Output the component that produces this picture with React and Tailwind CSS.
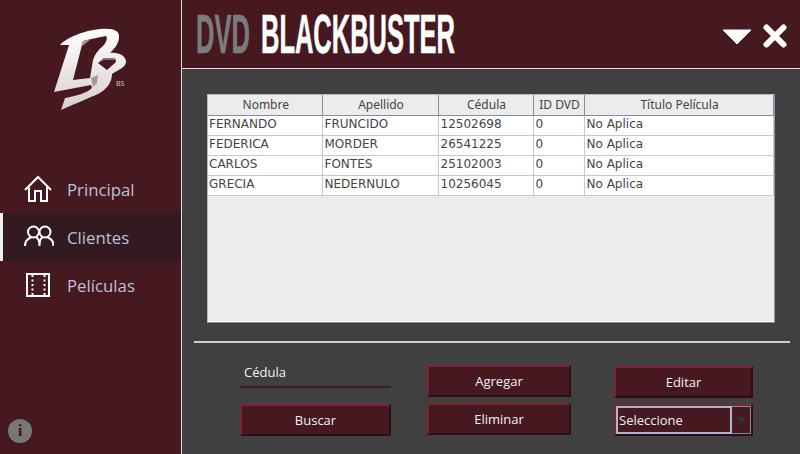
import React from "react";

const clientes = [
  ["FERNANDO", "FRUNCIDO", "12502698", "0", "No Aplica"],
  ["FEDERICA", "MORDER", "26541225", "0", "No Aplica"],
  ["CARLOS", "FONTES", "25102003", "0", "No Aplica"],
  ["GRECIA", "NEDERNULO", "10256045", "0", "No Aplica"],
];

const headers = ["Nombre", "Apellido", "Cédula", "ID DVD", "Título Película"];
const colWidths = ["w-[114px]", "w-[116px]", "w-[95px]", "w-[51px]", "w-[189px]"];

const Logo = () => (
  <svg width="80" height="90" viewBox="50 25 80 90" className="block">
    <defs>
      <linearGradient id="logoFill" x1="0" y1="0" x2="0" y2="1">
        <stop offset="0" stopColor="#ffffff" />
        <stop offset="1" stopColor="#d9cdcf" />
      </linearGradient>
    </defs>
    <path
      fillRule="evenodd"
      fill="url(#logoFill)"
      d="M59 45C66 37 85 30 100 29C113 28 119 31 118 38C117 45 113 49 109 53C118 52 125 56 125 62C125 67 117 70 111 74C111 82 106 90 95 95C85 99 72 105 60 110L64 98C75 96 86 93 91 88L90 85L53 92L68 45ZM82 41C90 39 99 37 105 36C107 38 105 43 102 46C97 50 94 54 92 60L89 78L72 80ZM97 63L103 58L114 58L115 62L106 70Z"
    />
    <path fill="#8d7276" d="M97 63L103 58L114 58L114.500 60L103 60Z" />
    <path fill="#a99498" d="M82 41L90 39L80 47L79 50Z" />
    <path fill="#a99498" d="M90 78L97 75L96 83L92 87Z" />
  </svg>
);

const HomeIcon = () => (
  <svg width="28" height="28" viewBox="0 0 28 28" fill="none" stroke="white" strokeWidth="2">
    <path d="M1 15L14 2L27 15M5 12V26H11V16H17V26H23V12" />
  </svg>
);

const UsersIcon = () => (
  <svg width="30" height="28" viewBox="0 0 30 28" fill="none" stroke="white" strokeWidth="2">
    <circle cx="9.5" cy="9" r="5.5" />
    <circle cx="21" cy="9" r="5.5" />
    <path d="M1 23C1 18 4 15.5 7 14.5M12 14.5C15 15.5 15.500 19 15.5 23M15.5 23C15.5 19 16 15.500 18.5 14.5M23.5 14.5C27 15.5 29.5 18 29.5 23" />
  </svg>
);

const FilmIcon = () => (
  <svg width="28" height="28" viewBox="0 0 28 28" fill="none" stroke="white">
    <rect x="3" y="3" width="22" height="22" strokeWidth="2" />
    <path d="M8.5 4V24M20.5 4V24" strokeWidth="2" strokeDasharray="2 2.5" />
  </svg>
);

const NavItem = ({ icon, label, active }) => (
  <div
    className={
      "flex h-12 items-center gap-[14px] pl-6 text-[16.8px] text-[#bcc2d8] " +
      (active ? "border-l-[3px] border-[#f0f0f0] bg-[#331a20] pl-[21px]" : "")
    }
  >
    <div className="w-[29px]">{icon}</div>
    <span className="pt-[2px]">{label}</span>
  </div>
);

const Boton = ({ children, className }) => (
  <button
    className={
      "flex items-center justify-center border-2 border-t-[#7d2433] border-l-[#7d2433] border-r-[#2a0f14] border-b-[#2a0f14] bg-[#461820] pt-[2px] text-[13px] text-[#f0f0f8] " +
      className
    }
  >
    {children}
  </button>
);

const App = () => {
  return (
    <div className="flex h-[454px] w-[800px] overflow-hidden bg-[#404040] font-['Open_Sans',sans-serif]">
      {/* Sidebar */}
      <aside className="flex w-[182px] shrink-0 flex-col border-r border-[#e0e0e0] bg-[#461820]">
        <div className="relative flex h-[165px] justify-center pt-[25px]">
          <Logo />
          <span className="absolute left-[116px] top-[79px] text-[7px] text-[#d8cccd]">BS</span>
        </div>
        <NavItem icon={<HomeIcon />} label="Principal" />
        <NavItem icon={<UsersIcon />} label="Clientes" active />
        <NavItem icon={<FilmIcon />} label="Películas" />
        <div className="mt-auto mb-[11px] ml-2 flex h-6 w-6 items-center justify-center rounded-full bg-[#777777] font-['Liberation_Serif',serif] text-[17px] font-bold text-[#461820]">
          i
        </div>
      </aside>

      <main className="flex min-w-0 flex-1 flex-col">
        {/* Header */}
        <header className="flex h-[69px] shrink-0 items-center justify-between border-b border-[#e0e0e0] bg-[#461820] pl-[14px] pr-[13px]">
          <div className="flex items-center whitespace-nowrap font-['Liberation_Sans',sans-serif] text-[56px] font-bold leading-none [-webkit-text-stroke:0.6px]">
            <span className="inline-block w-[65px] origin-left scale-x-[0.455] text-[#7c7c7c]">DVD</span>
            <span className="inline-block w-[200px] origin-left scale-x-[0.455] text-white">BLACKBUSTER</span>
          </div>
          <div className="flex items-center gap-[12px]">
            <svg width="28" height="16" viewBox="0 0 28 16" className="mt-[6px]">
              <path d="M0 1H28L14 15Z" fill="white" stroke="white" strokeLinejoin="round" />
            </svg>
            <svg width="24" height="24" viewBox="0 0 24 24" className="mt-[4px]">
              <path d="M3.5 3.5L20.5 20.5M20.5 3.5L3.5 20.5" stroke="white" strokeWidth="6" strokeLinecap="round" />
            </svg>
          </div>
        </header>

        {/* Tabla */}
        <div className="ml-[25px] mt-[25px] h-[229px] w-[568px] border border-[#b4bec8] border-b-[#7f8fa0] border-r-[#8a99a8] bg-[#ececec] font-['DejaVu_Sans',sans-serif] text-[12px] text-[#444444] shadow-[inset_0_-1px_0_#ffffff]">
          <table className="table-fixed border-collapse">
            <thead>
              <tr className="h-5 border-b border-[#7f8fa0]">
                {headers.map((h, i) => (
                  <th
                    key={h}
                    className={
                      "border-r border-[#7f8fa0] p-0 pl-[2px] text-center font-['Noto_Sans',sans-serif] font-normal leading-none " +
                      colWidths[i]
                    }
                  >
                    {h}
                  </th>
                ))}
              </tr>
            </thead>
            <tbody>
              {clientes.map((fila) => (
                <tr key={fila[0]} className="h-5 border-b border-[#c8c8c8] bg-white">
                  {fila.map((c, i) => (
                    <td
                      key={i}
                      className={"border-r border-[#c8c8c8] p-0 pb-[2px] leading-none " + (i === 0 ? "pl-[1px]" : "pl-[2px]")}
                    >
                      {c}
                    </td>
                  ))}
                </tr>
              ))}
            </tbody>
          </table>
        </div>

        <div className="ml-3 mt-[18px] h-[2px] w-[596px] bg-[#d0d0d0]" />

        {/* Formulario */}
        <div className="mt-[17px] flex pl-[58px]">
          <div className="w-[151px]">
            <div className="h-[28px] border-b-2 border-[#461820] pl-1 pt-[2px] text-[13px] leading-5 text-[#f0f0f8]">
              Cédula
            </div>
            <Boton className="mt-4 h-8 w-full">Buscar</Boton>
          </div>
          <div className="ml-[36px] w-[144px] pt-[5px]">
            <Boton className="h-8 w-full">Agregar</Boton>
            <Boton className="mt-[6px] h-8 w-full">Eliminar</Boton>
          </div>
          <div className="ml-[43px] w-[139px] pt-[6px]">
            <Boton className="h-8 w-full">Editar</Boton>
            <div className="mt-[6px] flex h-8 w-full border-2 border-t-[#7d2433] border-l-[#7d2433] border-r-[#2a0f14] border-b-[#2a0f14] bg-[#461820] text-[13px] text-[#f0f0f8]">
              <div className="flex w-[116px] items-center border-2 border-[#a9b8d0] pl-[1px] pt-[2px]">Seleccione</div>
              <div className="flex flex-1 items-center justify-center border border-l-0 border-[#7f8fa0]">
                <svg width="10" height="6" viewBox="0 0 10 6">
                  <path d="M0 0H10L5 6Z" fill="#333333" />
                </svg>
              </div>
            </div>
          </div>
        </div>
      </main>
    </div>
  );
};

export default App;
